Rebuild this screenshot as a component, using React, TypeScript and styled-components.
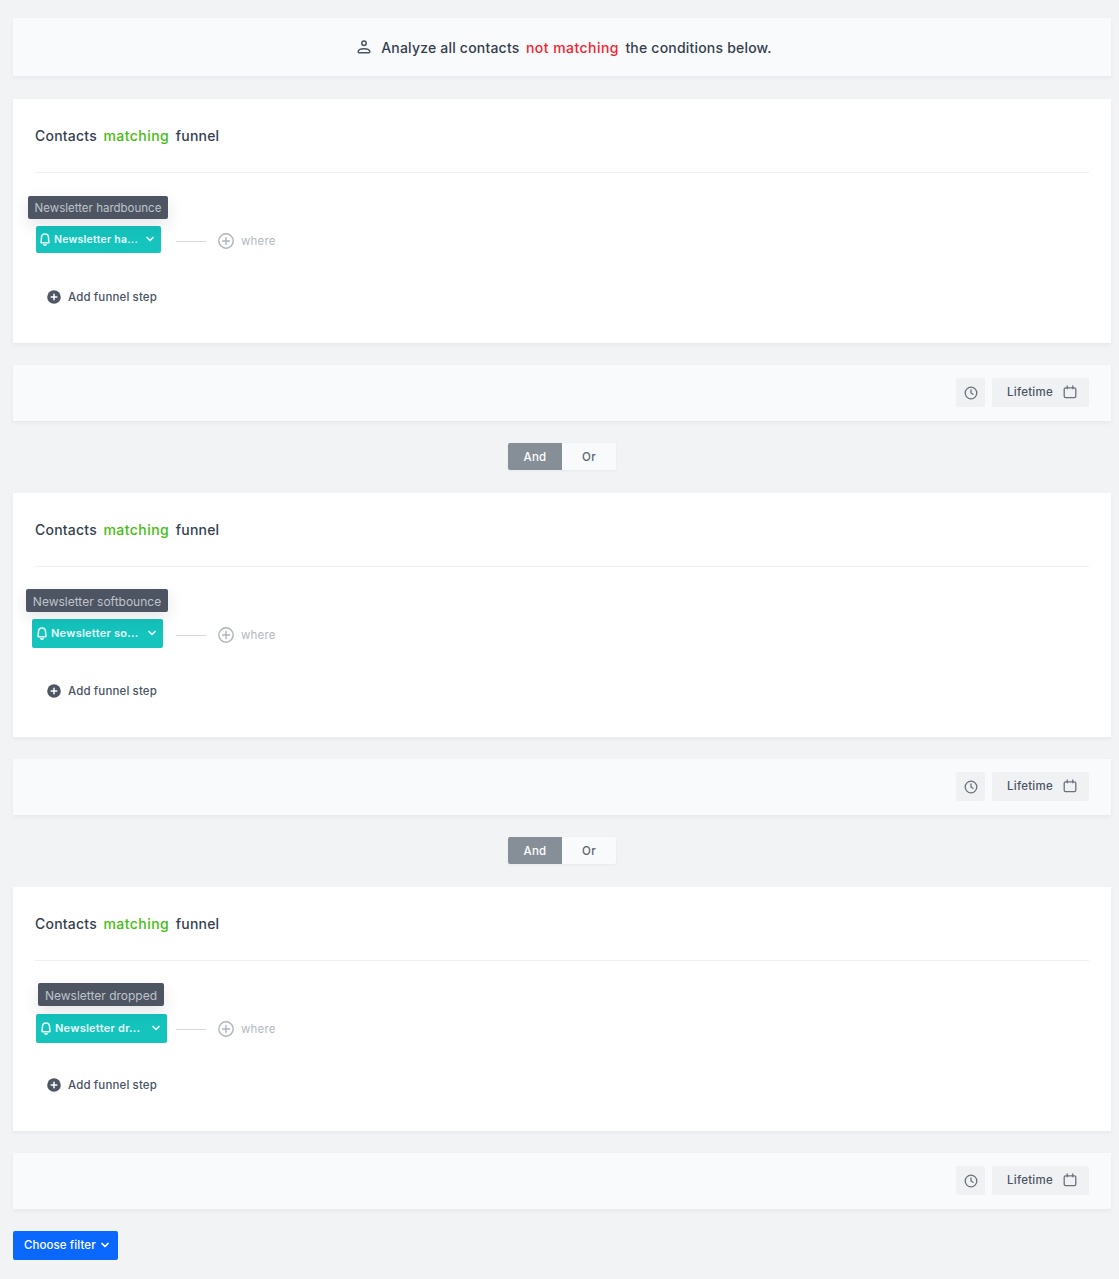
import React from 'react';
import styled, { createGlobalStyle } from 'styled-components';

const GlobalStyle = createGlobalStyle`
  html, body {
    margin: 0;
    padding: 0;
    background: #f2f3f5;
    font-family: Inter, "Noto Sans", sans-serif;
    color: #353f4e;
  }
`;

const Page = styled.div`
  display: flex;
  flex-direction: column;
  padding: 18px 8px 19px 13px;
  box-sizing: border-box;
`;

const TopBar = styled.div`
  height: 58px;
  box-sizing: border-box;
  display: flex;
  align-items: center;
  justify-content: center;
  background: #f9fafb;
  box-shadow: 0 2px 4px rgba(35, 41, 54, 0.05);
  font-size: 14px;
  font-weight: 500;
  letter-spacing: 0.2px;
  padding: 1px 0 0 5px;
`;

const UserIcon = styled.svg`
  width: 14px;
  height: 14px;
  margin: -1px 10px 0 0;
  color: #4a5463;
`;

const Spaced = styled.span<{ $color?: string }>`
  margin: 0 6.5px;
  color: ${({ $color }) => $color || 'inherit'};
  letter-spacing: 0.45px;
`;

const Card = styled.section`
  margin-top: 23px;
  height: 244px;
  box-sizing: border-box;
  background: #fff;
  padding: 0 22px;
  box-shadow: 0 2px 4px rgba(35, 41, 54, 0.05);
`;

const CardHeader = styled.header`
  height: 74px;
  box-sizing: border-box;
  display: flex;
  align-items: center;
  border-bottom: 1px solid #eff0f2;
  font-size: 14px;
  font-weight: 500;
  letter-spacing: 0.22px;
`;

const StepRow = styled.div`
  display: flex;
  align-items: center;
  margin-top: 53px;
  height: 30px;
`;

const StepSlot = styled.div`
  position: relative;
  width: 141px;
  height: 30px;
  flex-shrink: 0;
`;

const Tooltip = styled.div<{ $left: number; $top: number; $width: number; $size: number }>`
  position: absolute;
  left: ${({ $left }) => $left}px;
  top: ${({ $top }) => $top}px;
  width: ${({ $width }) => $width}px;
  height: 23px;
  box-sizing: border-box;
  padding-top: 1px;
  display: flex;
  align-items: center;
  justify-content: center;
  background: #4d5563;
  border-radius: 2px;
  color: #bfc3ca;
  font-size: ${({ $size }) => $size}px;
  white-space: nowrap;
  box-shadow: 0 6px 16px rgba(35, 41, 54, 0.12);
`;

const StepPill = styled.div<{ $offset: number; $up: number; $width: number; $height: number; $size: number }>`
  display: flex;
  align-items: center;
  box-sizing: border-box;
  margin-left: ${({ $offset }) => $offset}px;
  margin-top: ${({ $up }) => $up}px;
  width: ${({ $width }) => $width}px;
  height: ${({ $height }) => $height}px;
  padding: 0 5px 1px ${({ $size }) => ($size >= 11 ? 5 : 4)}px;
  background: #14c4bd;
  border-radius: 2px;
  color: #eafafa;
  font-size: ${({ $size }) => $size}px;
  font-weight: 600;
  letter-spacing: 0.25px;
  white-space: nowrap;
`;

const PillLabel = styled.span`
  flex: 1;
  margin-left: 4px;
`;

const BellIcon = styled.svg`
  width: 10px;
  height: 13px;
  flex-shrink: 0;
`;

const Chevron = styled.svg`
  width: 10px;
  height: 8px;
  flex-shrink: 0;
  margin-right: 1px;
`;

const Connector = styled.div`
  width: 30px;
  height: 1px;
  background: #d5d8dc;
  margin-right: 12px;
`;

const PlusOutline = styled.svg`
  width: 16px;
  height: 16px;
  margin-right: 7px;
`;

const WhereLabel = styled.span`
  font-size: 11.5px;
  letter-spacing: 0.2px;
  color: #b3b9c1;
`;

const AddStep = styled.div`
  display: flex;
  align-items: center;
  height: 20px;
  margin: 31px 0 0 12px;
  font-size: 11.5px;
  font-weight: 500;
  letter-spacing: 0.13px;
  color: #4a5463;
`;

const AddIcon = styled.svg`
  width: 14px;
  height: 14px;
  margin-right: 7px;
`;

const FooterBar = styled.div`
  margin-top: 22px;
  height: 56px;
  box-sizing: border-box;
  display: flex;
  align-items: center;
  justify-content: flex-end;
  gap: 7px;
  padding: 0 22px 1px 0;
  background: #f9fafb;
  box-shadow: 0 2px 4px rgba(35, 41, 54, 0.05);
`;

const ClockButton = styled.div`
  width: 29px;
  height: 29px;
  display: flex;
  align-items: center;
  justify-content: center;
  background: #f0f1f3;
  border-radius: 2px;
`;

const DateButton = styled.div`
  width: 97px;
  height: 29px;
  box-sizing: border-box;
  display: flex;
  align-items: center;
  justify-content: space-between;
  padding: 0 12px 1px 15px;
  background: #f0f1f3;
  border-radius: 2px;
  font-size: 11.5px;
  font-weight: 500;
  letter-spacing: 0.25px;
  color: #4a5463;
`;

const SmallIcon = styled.svg`
  width: 14px;
  height: 14px;
`;

const ToggleWrap = styled.div`
  align-self: center;
  display: flex;
  margin: 22px 0 0;
  height: 27px;
  border-radius: 2px;
  overflow: hidden;
  box-shadow: 0 1px 3px rgba(35, 41, 54, 0.05);
`;

const ToggleOption = styled.div<{ $active?: boolean }>`
  width: 54px;
  padding-top: 1px;
  box-sizing: border-box;
  display: flex;
  align-items: center;
  justify-content: center;
  font-size: 11.5px;
  font-weight: 500;
  letter-spacing: 0.3px;
  background: ${({ $active }) => ($active ? '#868f98' : '#f9fafb')};
  color: ${({ $active }) => ($active ? '#fff' : '#5b6470')};
`;

const ChooseButton = styled.button`
  align-self: flex-start;
  margin-top: 22px;
  width: 105px;
  height: 29px;
  display: flex;
  align-items: center;
  justify-content: space-between;
  padding: 0 7px 1px 11px;
  border: 0;
  border-radius: 2px;
  background: #0b68ff;
  color: #fff;
  font-family: inherit;
  font-size: 11.5px;
  font-weight: 500;
  letter-spacing: 0.08px;
`;

const ChevronGlyph = () => (
  <Chevron viewBox="0 0 10 8" fill="none" stroke="currentColor" strokeWidth="1.7" strokeLinecap="round" strokeLinejoin="round">
    <path d="M2 2.5 5 5.5 8 2.5" />
  </Chevron>
);

type FunnelProps = {
  name: string;
  short: string;
  tipLeft: number;
  tipTop: number;
  tipWidth: number;
  tipSize: number;
  pillOffset: number;
  pillUp: number;
  pillWidth: number;
  pillHeight: number;
  pillSize: number;
};

const Funnel: React.FC<FunnelProps> = (p) => (
  <>
    <Card>
      <CardHeader>
        Contacts<Spaced $color="#44bd0e">matching</Spaced>funnel
      </CardHeader>
      <StepRow>
        <StepSlot>
          <Tooltip $left={p.tipLeft} $top={p.tipTop} $width={p.tipWidth} $size={p.tipSize}>{p.name}</Tooltip>
          <StepPill $offset={p.pillOffset} $up={p.pillUp} $width={p.pillWidth} $height={p.pillHeight} $size={p.pillSize}>
            <BellIcon viewBox="0 0 10 13" fill="none" stroke="currentColor" strokeWidth="1.5" strokeLinejoin="round">
              <path d="M5 1C7.3 1 8.6 2.8 8.6 5.2c0 1.7.2 2.8.4 3.6.1.5-.2.9-.7.9H1.700c-.5 0-.8-.4-.7-.9.2-.8.4-1.900.4-3.600C1.400 2.800 2.700 1 5 1Z" />
              <path d="M3.700 11.700c.7.500 1.900.500 2.600 0" strokeLinecap="round" />
            </BellIcon>
            <PillLabel>{p.short}</PillLabel>
            <ChevronGlyph />
          </StepPill>
        </StepSlot>
        <Connector />
        <PlusOutline viewBox="0 0 16 16" fill="none" stroke="#adb4bd" strokeWidth="1.4" strokeLinecap="round">
          <circle cx="8" cy="8" r="7.2" />
          <path d="M8 4.500v7M4.500 8h7" />
        </PlusOutline>
        <WhereLabel>where</WhereLabel>
      </StepRow>
      <AddStep>
        <AddIcon viewBox="0 0 14 14">
          <circle cx="7" cy="7" r="6.800" fill="#4e5664" />
          <path d="M7 4.200v5.600M4.200 7h5.600" stroke="#fff" strokeWidth="1.500" strokeLinecap="round" />
        </AddIcon>
        Add funnel step
      </AddStep>
    </Card>
    <FooterBar>
      <ClockButton>
        <SmallIcon viewBox="0 0 14 14" fill="none" stroke="#6a727d" strokeWidth="1.300" strokeLinecap="round" strokeLinejoin="round">
          <circle cx="7" cy="7" r="5.800" />
          <path d="M7 3.800V7l2 1.300" />
        </SmallIcon>
      </ClockButton>
      <DateButton>
        Lifetime
        <SmallIcon viewBox="0 0 14 14" fill="none" stroke="#6a727d" strokeWidth="1.300" strokeLinecap="round">
          <rect x="1.200" y="2.800" width="11.600" height="9.800" rx="1.400" />
          <path d="M4.200 1v2.800M9.800 1v2.800" />
        </SmallIcon>
      </DateButton>
    </FooterBar>
  </>
);

const Toggle = () => (
  <ToggleWrap>
    <ToggleOption $active>And</ToggleOption>
    <ToggleOption>Or</ToggleOption>
  </ToggleWrap>
);

export default function App() {
  return (
    <Page>
      <GlobalStyle />
      <TopBar>
        <UserIcon viewBox="0 0 14 14" fill="none" stroke="currentColor" strokeWidth="1.500">
          <circle cx="7" cy="3.200" r="2.200" />
          <path d="M1.200 11.800c0-1.900 2.100-3.100 5.800-3.100s5.800 1.200 5.800 3.100c0 .5-.4.9-.9.9H2.100c-.5 0-.9-.4-.9-.9Z" />
        </UserIcon>
        Analyze all contacts<Spaced $color="#f5222d">not matching</Spaced>the conditions below.
      </TopBar>
      <Funnel
        name="Newsletter hardbounce"
        short="Newsletter ha..."
        tipLeft={-7}
        tipTop={-30}
        tipWidth={140}
        tipSize={11.5}
        pillOffset={1}
        pillUp={0}
        pillWidth={125}
        pillHeight={27}
        pillSize={10.5}
      />
      <Toggle />
      <Funnel
        name="Newsletter softbounce"
        short="Newsletter so..."
        tipLeft={-9}
        tipTop={-31}
        tipWidth={142}
        tipSize={12}
        pillOffset={-3}
        pillUp={-1}
        pillWidth={131}
        pillHeight={29}
        pillSize={11}
      />
      <Toggle />
      <Funnel
        name="Newsletter dropped"
        short="Newsletter dr..."
        tipLeft={3}
        tipTop={-31}
        tipWidth={126}
        tipSize={12}
        pillOffset={1}
        pillUp={0}
        pillWidth={131}
        pillHeight={29}
        pillSize={11}
      />
      <ChooseButton>
        Choose filter
        <ChevronGlyph />
      </ChooseButton>
    </Page>
  );
}
